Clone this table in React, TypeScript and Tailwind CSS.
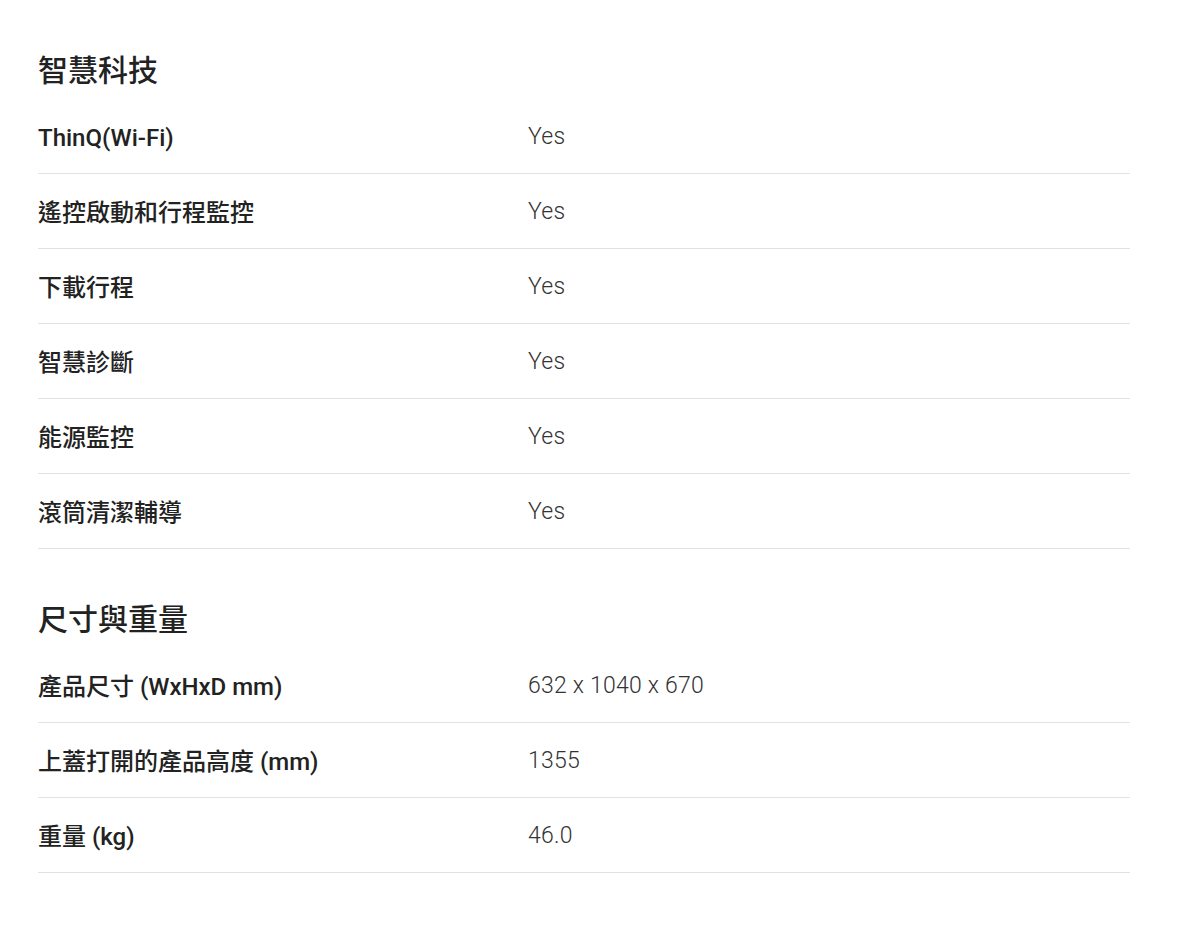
import React from "react";

interface SpecRow {
  label: string;
  value: string;
}

interface SpecSection {
  title: string;
  rows: SpecRow[];
}

const sections: SpecSection[] = [
  {
    title: "智慧科技",
    rows: [
      { label: "ThinQ(Wi-Fi)", value: "Yes" },
      { label: "遙控啟動和行程監控", value: "Yes" },
      { label: "下載行程", value: "Yes" },
      { label: "智慧診斷", value: "Yes" },
      { label: "能源監控", value: "Yes" },
      { label: "滾筒清潔輔導", value: "Yes" },
    ],
  },
  {
    title: "尺寸與重量",
    rows: [
      { label: "產品尺寸 (WxHxD mm)", value: "632 x 1040 x 670" },
      { label: "上蓋打開的產品高度 (mm)", value: "1355" },
      { label: "重量 (kg)", value: "46.0" },
    ],
  },
];

const font = "font-['Roboto','Noto_Sans_CJK_TC',sans-serif]";

export default function App() {
  return (
    <div className={`min-h-[951px] bg-white pl-[38px] pr-[52px] ${font}`}>
      {sections.map((section) => (
        <section key={section.title} className="pt-[49px]">
          <h2 className="mb-[6px] h-[44px] text-[30px] font-medium leading-[44px] text-[#222222]">
            {section.title}
          </h2>
          <div>
            {section.rows.map((row) => (
              <div
                key={row.label}
                className="grid h-[75px] grid-cols-[490px_1fr] items-center border-b border-[#e2e2e2] pt-[3px]"
              >
                <div className="text-[24px] font-medium text-[#222222]">{row.label}</div>
                <div className="text-[23px] font-light tracking-[0.01em] text-[#333333]">{row.value}</div>
              </div>
            ))}
          </div>
        </section>
      ))}
    </div>
  );
}
